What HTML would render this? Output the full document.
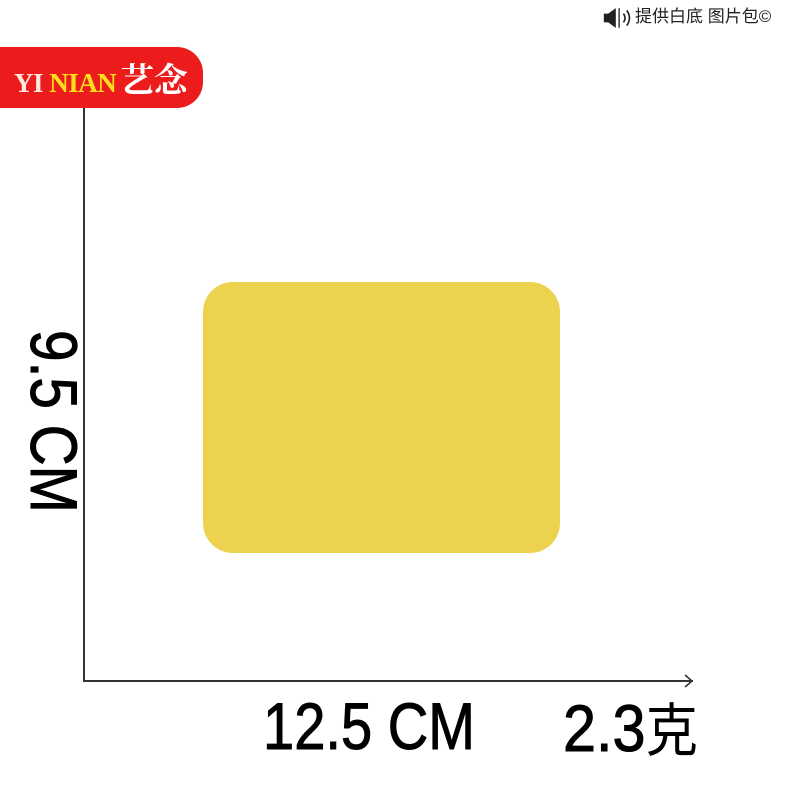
<!DOCTYPE html>
<html><head><meta charset="utf-8"><style>
body{margin:0;width:788px;height:788px;background:#fff;position:relative;overflow:hidden;font-family:"Liberation Sans","Noto Sans CJK SC",sans-serif}
.a{position:absolute}
</style></head><body>
<div class="a" style="left:0;top:47px;width:203px;height:61px;background:#ec1c1c;border-radius:0 26px 26px 0"></div>
<div class="a" style="left:14px;top:58px;font-family:'Liberation Serif',serif;font-weight:bold;font-size:27px;line-height:40px;color:#fde9e0;white-space:nowrap;letter-spacing:-0.5px">YI <span style="color:#ffe11a">NIAN</span><span style="font-family:'Noto Serif CJK SC',serif;color:#fff;font-size:34px;font-weight:bold;margin-left:4px">艺念</span></div>
<div class="a" style="left:601px;top:4px;font-size:17px;line-height:26px;color:#222;white-space:nowrap">
<svg width="34" height="24" viewBox="0 0 30 22" style="vertical-align:middle"><rect x="2" y="7" width="5" height="8" fill="#222"/><path d="M6 7 L13 2 V20 L6 15Z" fill="#222"/><line x1="16" y1="2" x2="16" y2="20" stroke="#222" stroke-width="1.2"/><path d="M20 7 Q23 11 20 15 M23 4 Q28 11 23 18" fill="none" stroke="#222" stroke-width="1.5"/></svg>提供白底 图片包©</div>
<div class="a" style="left:83px;top:108px;width:2px;height:574px;background:#333"></div>
<div class="a" style="left:83px;top:680px;width:610px;height:2px;background:#333"></div>
<svg class="a" style="left:683px;top:674px" width="12" height="14"><path d="M2 1 L9 7 L2 13" fill="none" stroke="#333" stroke-width="1.6"/></svg>
<div class="a" style="left:203px;top:282px;width:357px;height:271px;background:#ecd24f;border-radius:30px"></div>
<div class="a" style="left:263px;top:690px;font-size:66px;line-height:72px;color:#000;white-space:nowrap;transform:scaleX(0.85);transform-origin:0 0;-webkit-text-stroke:1px #000">12.5 CM</div>
<div class="a" style="left:563px;top:690px;font-size:66px;line-height:72px;color:#000;white-space:nowrap;transform:scaleX(0.9);transform-origin:0 0;-webkit-text-stroke:1px #000">2.3<span style="font-family:'Noto Sans CJK SC',sans-serif;font-size:58px;-webkit-text-stroke:0">克</span></div>
<div class="a" style="left:90px;top:330px;font-size:66px;line-height:72px;color:#000;white-space:nowrap;transform:rotate(90deg) scaleX(0.86);transform-origin:0 0;-webkit-text-stroke:1px #000">9.5 CM</div>
</body></html>
